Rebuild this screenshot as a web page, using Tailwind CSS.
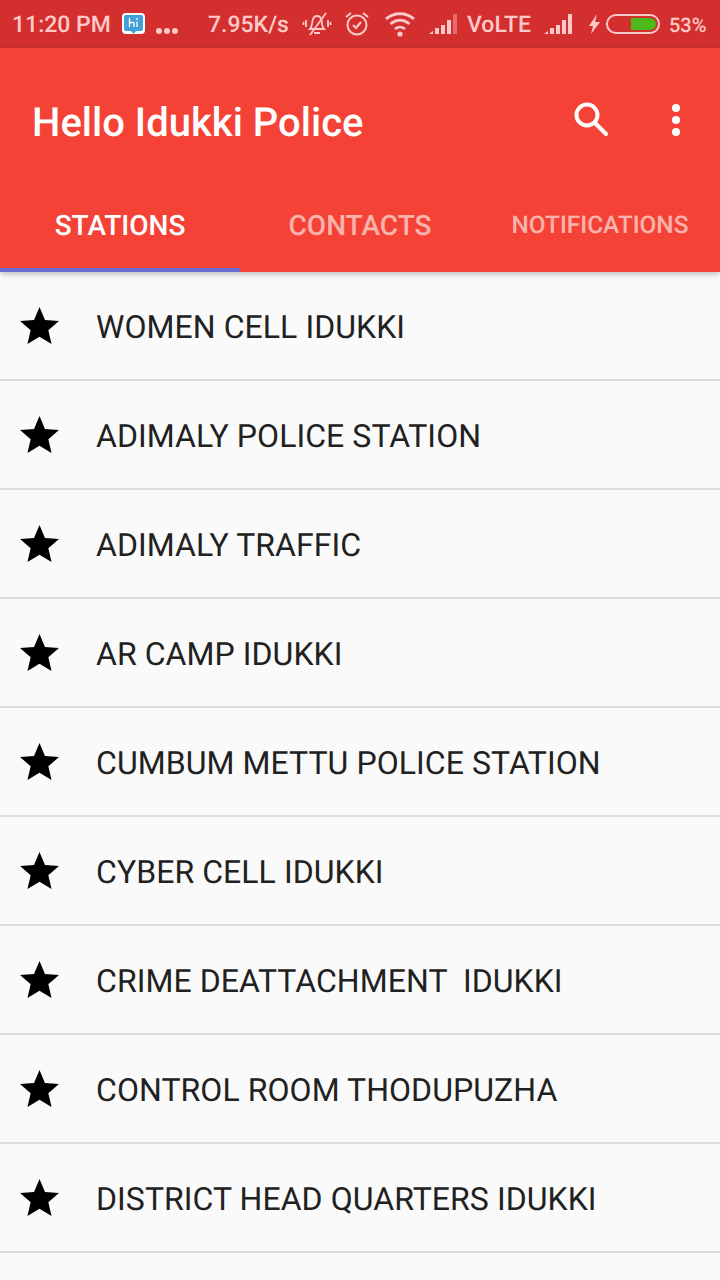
<!DOCTYPE html>
<html lang="en">
<head>
    <meta charset="UTF-8">
    <meta name="viewport" content="width=device-width, initial-scale=1.0">
    <title>Hello Idukki Police</title>
    <script src="https://cdn.jsdelivr.net/npm/@tailwindcss/browser@4"></script>
</head>
<body class="bg-[#fafafa] font-['Roboto',sans-serif] [text-rendering:geometricPrecision] w-[720px] h-[1280px] overflow-hidden">
    <!-- status bar -->
    <div class="h-12 bg-[#d32f2f] flex items-center text-[#ffc9c9] font-medium">
        <span class="ml-3 mt-[2px] text-[23px] w-[110px] whitespace-nowrap">11:20 PM</span>
        <svg class="w-6 h-7" viewBox="0 0 24 28">
            <rect x="0" y="3" width="23" height="21" rx="4" fill="#fff"/>
            <rect x="2" y="5" width="19" height="16" rx="2" fill="#42a0d8"/>
            <path d="M9 21h5l-2.500 3z" fill="#42a0d8"/>
            <path d="M7.500 8v9M7.500 12.500h3.500c.6 0 1 .4 1 1V17M15 11.500V17" stroke="#fff" stroke-width="1.300" fill="none"/>
            <circle cx="15" cy="9" r=".9" fill="#fff"/>
        </svg>
        <div class="flex gap-[2px] ml-[10px] mt-[14px]">
            <i class="w-[6px] h-[6px] rounded-full bg-[#ffc9c9]"></i>
            <i class="w-[6px] h-[6px] rounded-full bg-[#ffc9c9]"></i>
            <i class="w-[6px] h-[6px] rounded-full bg-[#ffc9c9]"></i>
        </div>
        <span class="ml-[30px] mt-[2px] w-[81px] text-[23px] whitespace-nowrap">7.95K/s</span>
        <!-- muted vibrate -->
        <svg class="ml-[13px] w-[30px] h-[26px]" viewBox="0 0 30 26" fill="none" stroke="#ffc9c9" stroke-width="1.800">
            <path d="M8 18c2-2 2-5 2.500-8 .5-3 2.500-5 4.500-5s4 1.500 4.500 4c.5 3 .5 7 2.500 9z"/>
            <path d="M12 22h6M8 24 24 2M4 9v7M1.500 11v3M26 9v7M28.500 11v3"/>
        </svg>
        <!-- alarm -->
        <svg class="ml-[12px] w-[27px] h-[28px]" viewBox="0 0 27 28" fill="none" stroke="#ffc9c9" stroke-width="2">
            <circle cx="13" cy="15" r="9.500"/>
            <path d="M9 15l3 3 5-6M2 7l5-4M24 7l-5-4"/>
        </svg>
        <!-- wifi -->
        <svg class="ml-[13px] w-[32px] h-[26px]" viewBox="0 0 32 26" fill="none" stroke="#ffc9c9" stroke-width="2.800">
            <path d="M2 8c8-7 20-7 28 0M6.500 13c6-5 13-5 19 0M11 18c3-2.500 7-2.500 10 0"/>
            <circle cx="16" cy="23" r="2.600" fill="#ffc9c9" stroke="none"/>
        </svg>
        <!-- signal 1 -->
        <svg class="ml-[13px] w-[30px] h-[22px]" viewBox="0 0 30 22" fill="#ffc9c9">
            <path d="M0 21l4-3v3zM6 15h4v6H6zM12 12h4v9h-4zM18 7h4v14h-4z"/>
            <path d="M24 1h4v20h-4z" fill-opacity=".4"/>
        </svg>
        <span class="ml-[8px] mt-[2px] w-[64px] text-[23px] whitespace-nowrap">VoLTE</span>
        <!-- signal 2 -->
        <svg class="ml-[13px] w-[30px] h-[22px]" viewBox="0 0 30 22" fill="#ffc9c9">
            <path d="M0 21l4-3v3zM6 15h4v6H6zM12 12h4v9h-4zM18 7h4v14h-4zM24 1h4v20h-4z"/>
        </svg>
        <!-- charging bolt -->
        <svg class="ml-[14px] w-[14px] h-[22px]" viewBox="0 0 14 22" fill="#ffc9c9">
            <path d="M9 1 1 13h4l-2 8 9-12H7z"/>
        </svg>
        <!-- battery -->
        <div class="ml-[4px] w-[54px] h-[20px] rounded-full border-2 border-[#ffc9c9] flex justify-end items-center pr-[2px]">
            <div class="w-[25px] h-[12px] bg-[#4cb81c] rounded-r-full"></div>
        </div>
        <span class="ml-[9px] mt-[2px] text-[20px] whitespace-nowrap">53%</span>
    </div>

    <!-- app bar -->
    <header class="bg-[#f44336] h-[224px] text-white shadow-[0_2px_6px_rgba(0,0,0,0.25)] flex flex-col">
        <div class="h-[148px] flex items-center pl-[32px]">
            <h1 class="text-[40px] font-medium leading-none mt-[2px] flex-1 whitespace-nowrap">Hello Idukki Police</h1>
            <svg class="w-[40px] h-[40px] mr-[61px] mt-[-4px]" viewBox="0 0 40 40" fill="none" stroke="#fff" stroke-width="4">
                <circle cx="16" cy="15" r="10.500"/>
                <path d="M24 23l11 11" stroke-linecap="round"/>
            </svg>
            <div class="flex flex-col gap-[4px] mr-[40px] mt-[-4px]">
                <i class="w-[8px] h-[8px] rounded-full bg-white"></i>
                <i class="w-[8px] h-[8px] rounded-full bg-white"></i>
                <i class="w-[8px] h-[8px] rounded-full bg-white"></i>
            </div>
        </div>
        <div class="flex flex-1 font-medium">
            <div class="w-[240px] flex items-center justify-center text-[28px] border-b-4 border-[#6a6cd0] pb-[12px]">STATIONS</div>
            <div class="w-[240px] flex items-center justify-center text-[28px] text-white/60 pb-[16px]">CONTACTS</div>
            <div class="w-[240px] flex items-center justify-center text-[24.400px] text-white/60 pb-[18px] whitespace-nowrap">NOTIFICATIONS</div>
        </div>
    </header>

    <!-- stations list -->
    <ul class="text-[32px] text-[#212121] tracking-[0.06px]">
        <li class="h-[109px] flex items-center border-b-2 border-[#dcdcdc]">
            <svg class="ml-[20px] w-[39px] h-[37px]" viewBox="2 2 20 19"><path d="M12 17.270 18.180 21l-1.640-7.030L22 9.240l-7.190-.610L12 2 9.190 8.630 2 9.240l5.460 4.730L5.820 21z" fill="#000"/></svg>
            <span class="ml-[37px] mt-[2px] whitespace-pre">WOMEN CELL IDUKKI</span>
        </li>
        <li class="h-[109px] flex items-center border-b-2 border-[#dcdcdc]">
            <svg class="ml-[20px] w-[39px] h-[37px]" viewBox="2 2 20 19"><path d="M12 17.270 18.180 21l-1.640-7.030L22 9.240l-7.190-.610L12 2 9.190 8.630 2 9.240l5.460 4.730L5.820 21z" fill="#000"/></svg>
            <span class="ml-[37px] mt-[2px] whitespace-pre">ADIMALY POLICE STATION</span>
        </li>
        <li class="h-[109px] flex items-center border-b-2 border-[#dcdcdc]">
            <svg class="ml-[20px] w-[39px] h-[37px]" viewBox="2 2 20 19"><path d="M12 17.270 18.180 21l-1.640-7.030L22 9.240l-7.190-.610L12 2 9.190 8.630 2 9.240l5.460 4.730L5.820 21z" fill="#000"/></svg>
            <span class="ml-[37px] mt-[2px] whitespace-pre">ADIMALY TRAFFIC</span>
        </li>
        <li class="h-[109px] flex items-center border-b-2 border-[#dcdcdc]">
            <svg class="ml-[20px] w-[39px] h-[37px]" viewBox="2 2 20 19"><path d="M12 17.270 18.180 21l-1.640-7.030L22 9.240l-7.190-.610L12 2 9.190 8.630 2 9.240l5.460 4.730L5.820 21z" fill="#000"/></svg>
            <span class="ml-[37px] mt-[2px] whitespace-pre">AR CAMP IDUKKI</span>
        </li>
        <li class="h-[109px] flex items-center border-b-2 border-[#dcdcdc]">
            <svg class="ml-[20px] w-[39px] h-[37px]" viewBox="2 2 20 19"><path d="M12 17.270 18.180 21l-1.640-7.030L22 9.240l-7.190-.610L12 2 9.190 8.630 2 9.240l5.460 4.730L5.820 21z" fill="#000"/></svg>
            <span class="ml-[37px] mt-[2px] whitespace-pre">CUMBUM METTU POLICE STATION</span>
        </li>
        <li class="h-[109px] flex items-center border-b-2 border-[#dcdcdc]">
            <svg class="ml-[20px] w-[39px] h-[37px]" viewBox="2 2 20 19"><path d="M12 17.270 18.180 21l-1.640-7.030L22 9.240l-7.190-.610L12 2 9.190 8.630 2 9.240l5.460 4.730L5.820 21z" fill="#000"/></svg>
            <span class="ml-[37px] mt-[2px] whitespace-pre">CYBER CELL IDUKKI</span>
        </li>
        <li class="h-[109px] flex items-center border-b-2 border-[#dcdcdc]">
            <svg class="ml-[20px] w-[39px] h-[37px]" viewBox="2 2 20 19"><path d="M12 17.270 18.180 21l-1.640-7.030L22 9.240l-7.190-.610L12 2 9.190 8.630 2 9.240l5.460 4.730L5.820 21z" fill="#000"/></svg>
            <span class="ml-[37px] mt-[2px] whitespace-pre">CRIME DEATTACHMENT  IDUKKI</span>
        </li>
        <li class="h-[109px] flex items-center border-b-2 border-[#dcdcdc]">
            <svg class="ml-[20px] w-[39px] h-[37px]" viewBox="2 2 20 19"><path d="M12 17.270 18.180 21l-1.640-7.030L22 9.240l-7.190-.610L12 2 9.190 8.630 2 9.240l5.460 4.730L5.820 21z" fill="#000"/></svg>
            <span class="ml-[37px] mt-[2px] whitespace-pre">CONTROL ROOM THODUPUZHA</span>
        </li>
        <li class="h-[109px] flex items-center border-b-2 border-[#dcdcdc]">
            <svg class="ml-[20px] w-[39px] h-[37px]" viewBox="2 2 20 19"><path d="M12 17.270 18.180 21l-1.640-7.030L22 9.240l-7.190-.610L12 2 9.190 8.630 2 9.240l5.460 4.730L5.820 21z" fill="#000"/></svg>
            <span class="ml-[37px] mt-[2px] whitespace-pre">DISTRICT HEAD QUARTERS IDUKKI</span>
        </li>
    </ul>
</body>
</html>
